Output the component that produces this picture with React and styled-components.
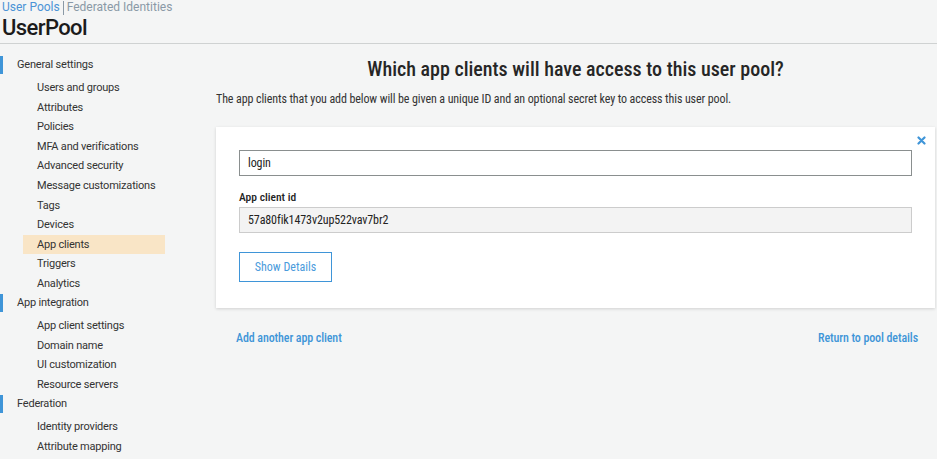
import React from "react";
import styled, { createGlobalStyle } from "styled-components";

const Global = createGlobalStyle`
  html, body { margin: 0; padding: 0; background: #f4f5f5; }
  body { font-family: Roboto, "Liberation Sans", Arial, sans-serif; color: #333; }
  * { box-sizing: border-box; }
`;

const Page = styled.div`
  width: 937px;
  height: 459px;
  overflow: hidden;
  background: #f4f5f5;
`;

const Header = styled.header`
  padding: 0 0 0 2px;
  border-bottom: 1px solid #cfd2d2;
  height: 44px;
`;

const Crumbs = styled.div`
  display: flex;
  align-items: center;
  font-size: 12px;
  line-height: 15px;
  height: 15px;
`;

const Crumb = styled.span`
  color: ${(p) => (p.$active ? "#4b93d6" : "#8a99a6")};
`;

const Sep = styled.span`
  display: inline-block;
  width: 1px;
  height: 14px;
  background: #8a99a6;
  margin: 0 3px 0 3px;
`;

const Title = styled.h1`
  margin: 0;
  font-size: 22px;
  font-weight: 500;
  line-height: 26px;
  color: #1b1b1b;
  letter-spacing: -0.6px;
`;

const Body = styled.div`
  display: flex;
`;

const Sidebar = styled.nav`
  width: 196px;
  flex: none;
  padding-top: 12px;
  font-size: 11px;
  letter-spacing: -0.2px;
  color: #333;
`;

const Section = styled.div`
  display: flex;
  flex-direction: column;
  margin-bottom: 0.5px;
`;

const SectionTitle = styled.div`
  position: relative;
  height: 18px;
  line-height: 18px;
  padding-left: 17px;
  margin-bottom: 4px;
  &::before {
    content: "";
    position: absolute;
    left: 0;
    top: 0;
    bottom: 0;
    width: 3px;
    background: #3f95d8;
  }
`;

const Item = styled.div`
  margin-left: 23px;
  width: 142px;
  height: 19.6px;
  line-height: 19.6px;
  padding-left: 14px;
  background: ${(p) => (p.$active ? "#f9e5c6" : "transparent")};
  color: #333;
  white-space: nowrap;
`;

const Main = styled.main`
  flex: 1;
  padding: 13px 2px 0 20px;
  font-stretch: condensed;
`;

const Heading = styled.h2`
  margin: 0;
  text-align: center;
  font-size: 20px;
  font-weight: 480;
  line-height: 24px;
  color: #262626;
  font-stretch: condensed;
`;

const Lead = styled.p`
  margin: 11px 0 0;
  font-size: 12px;
  line-height: 14px;
  color: #333;
  letter-spacing: -0.1px;
`;

const Card = styled.section`
  position: relative;
  margin-top: 21px;
  background: #fff;
  box-shadow: 0 1px 3px rgba(0, 0, 0, 0.15);
  padding: 23px 23px 26px 23px;
  display: flex;
  flex-direction: column;
`;

const Close = styled.button`
  position: absolute;
  right: 9px;
  top: 9px;
  border: 0;
  background: none;
  padding: 0;
  width: 9px;
  height: 9px;
  display: flex;
  cursor: pointer;
`;

const TextField = styled.div`
  height: 26px;
  border: 1px solid ${(p) => (p.$readonly ? "#cccccc" : "#8a8f8f")};
  background: ${(p) => (p.$readonly ? "#f3f3f3" : "#fff")};
  padding-left: 8px;
  display: flex;
  align-items: center;
  font-size: 12px;
  color: #222;
  letter-spacing: -0.1px;
`;

const Label = styled.div`
  margin-top: 14px;
  margin-bottom: 3px;
  font-size: 11.5px;
  line-height: 14px;
  font-weight: 500;
  color: #222;
`;

const Button = styled.button`
  align-self: flex-start;
  margin-top: 19px;
  width: 93px;
  height: 30px;
  border: 1px solid #3f95d8;
  background: #fff;
  color: #4a9bdc;
  font-family: inherit;
  font-stretch: condensed;
  font-size: 12px;
  padding: 0;
`;

const Links = styled.div`
  display: flex;
  justify-content: space-between;
  padding: 23px 17px 0 20px;
`;

const LinkText = styled.a`
  font-size: 12px;
  font-weight: 500;
  color: #3f95d8;
  letter-spacing: -0.1px;
  text-decoration: none;
`;

const sections = [
  {
    title: "General settings",
    items: [
      "Users and groups",
      "Attributes",
      "Policies",
      "MFA and verifications",
      "Advanced security",
      "Message customizations",
      "Tags",
      "Devices",
      "App clients",
      "Triggers",
      "Analytics",
    ],
  },
  {
    title: "App integration",
    items: [
      "App client settings",
      "Domain name",
      "UI customization",
      "Resource servers",
    ],
  },
  { title: "Federation", items: ["Identity providers", "Attribute mapping"] },
];

export default function App() {
  return (
    <Page>
      <Global />
      <Header>
        <Crumbs>
          <Crumb $active>User Pools</Crumb>
          <Sep />
          <Crumb>Federated Identities</Crumb>
        </Crumbs>
        <Title>UserPool</Title>
      </Header>
      <Body>
        <Sidebar>
          {sections.map((s) => (
            <Section key={s.title}>
              <SectionTitle>{s.title}</SectionTitle>
              {s.items.map((i) => (
                <Item key={i} $active={i === "App clients"}>
                  {i}
                </Item>
              ))}
            </Section>
          ))}
        </Sidebar>
        <Main>
          <Heading>Which app clients will have access to this user pool?</Heading>
          <Lead>
            The app clients that you add below will be given a unique ID and an
            optional secret key to access this user pool.
          </Lead>
          <Card>
            <Close aria-label="Remove">
              <svg width="9" height="9" viewBox="0 0 9 9">
                <path d="M1.5 1.5 L7.5 7.5 M7.5 1.5 L1.5 7.5" stroke="#3f95d8" strokeWidth="2.2" strokeLinecap="round" />
              </svg>
            </Close>
            <TextField>login</TextField>
            <Label>App client id</Label>
            <TextField $readonly>57a80fik1473v2up522vav7br2</TextField>
            <Button>Show Details</Button>
          </Card>
          <Links>
            <LinkText href="#">Add another app client</LinkText>
            <LinkText href="#">Return to pool details</LinkText>
          </Links>
        </Main>
      </Body>
    </Page>
  );
}
